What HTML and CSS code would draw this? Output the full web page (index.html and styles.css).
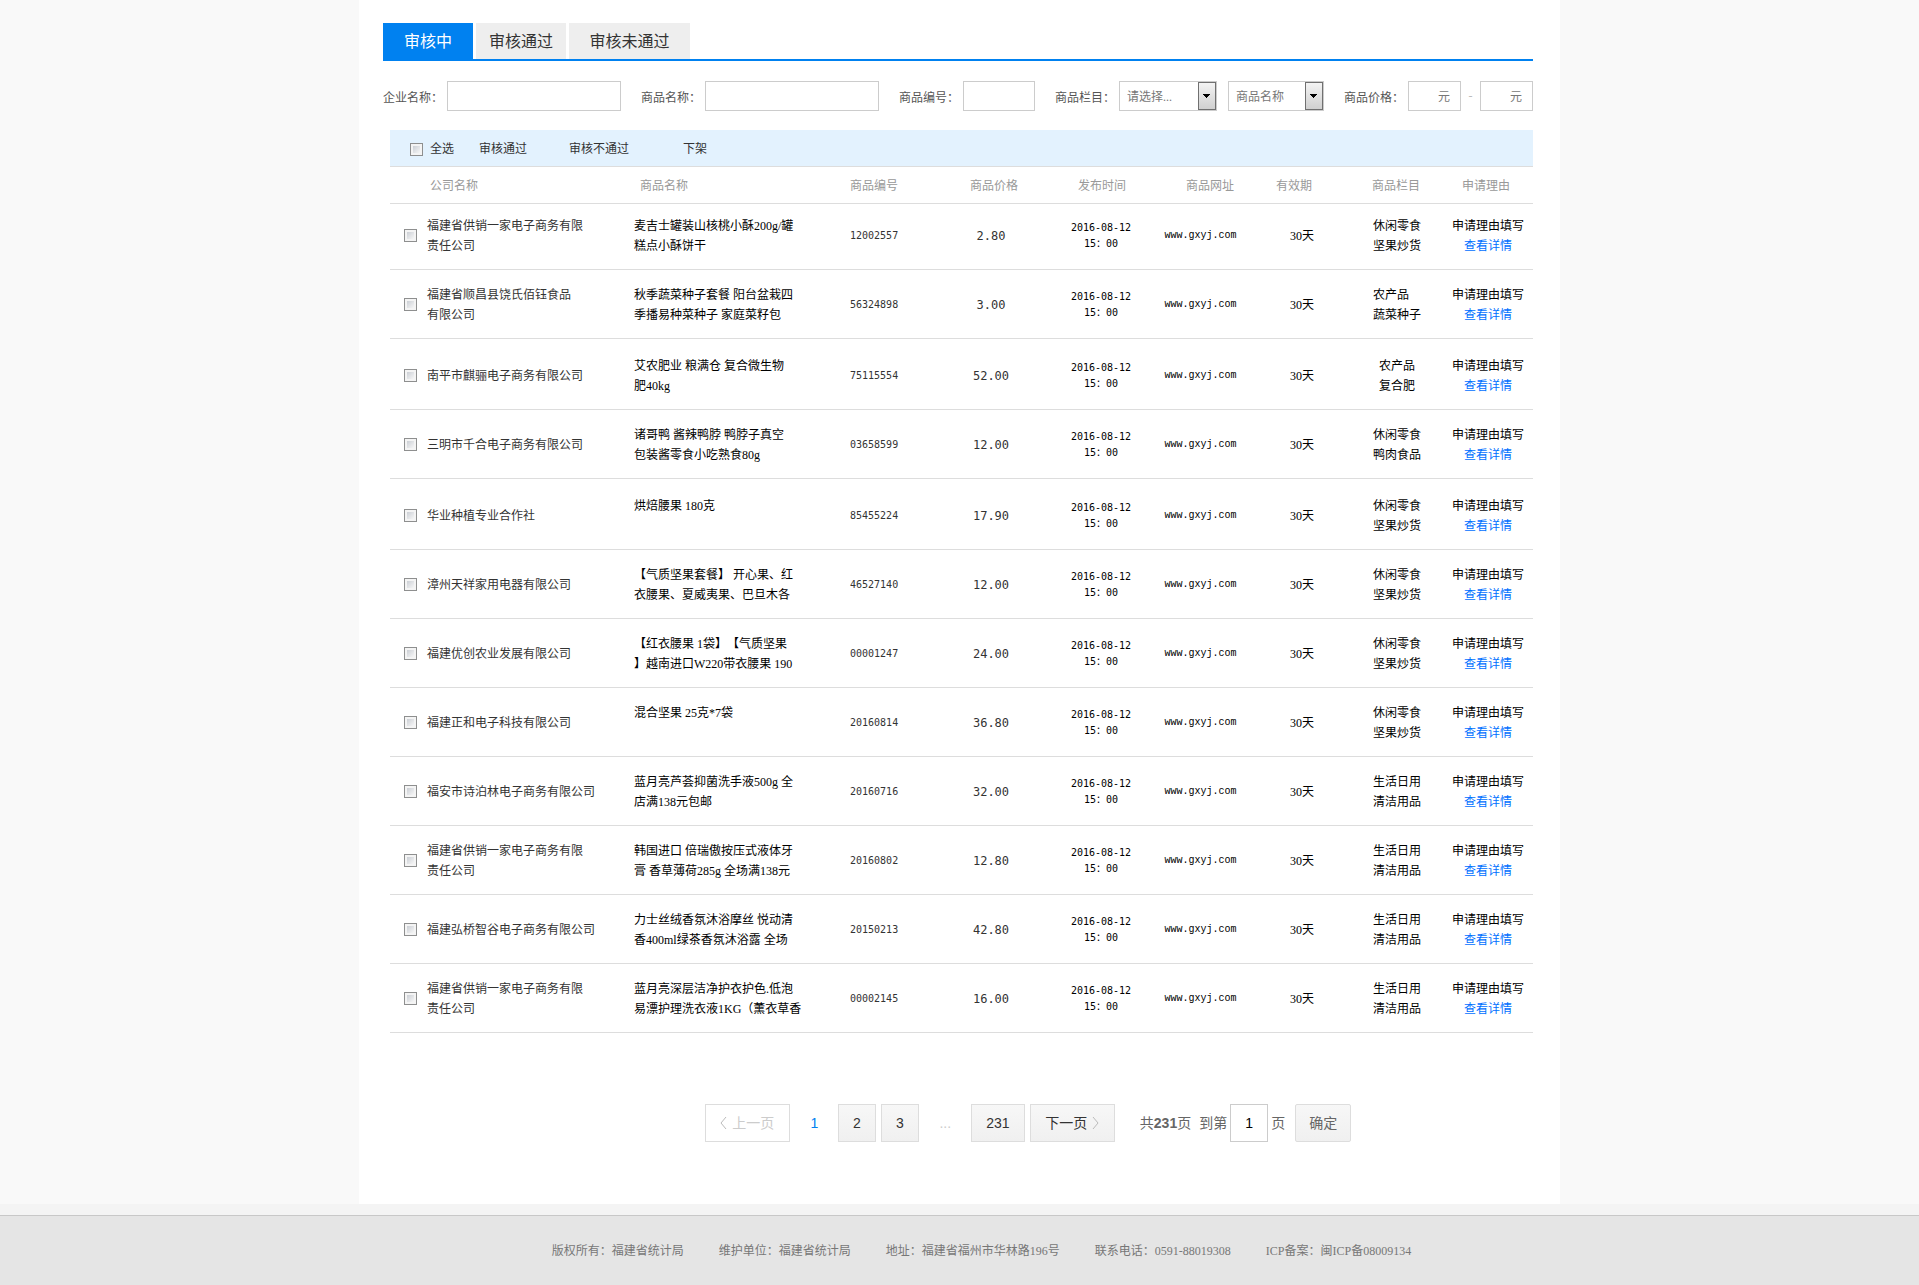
FILE: index.html
```
<!DOCTYPE html>
<html lang="zh-CN">
<head>
<meta charset="utf-8">
<title>商品审核</title>
<link rel="stylesheet" href="styles.css">
</head>
<body>
<main class="page">
  <nav class="tabs">
    <button type="button" class="tab active">审核中</button>
    <button type="button" class="tab">审核通过</button>
    <button type="button" class="tab wide">审核未通过</button>
  </nav>

  <form class="filters">
    <div class="field"><label for="company">企业名称：</label><input class="box long" id="company" type="text"></div>
    <div class="field"><label for="product">商品名称：</label><input class="box long" id="product" type="text"></div>
    <div class="field"><label for="code">商品编号：</label><input class="box short" id="code" type="text"></div>
    <div class="field"><label for="category">商品栏目：</label>
      <span class="drop"><select class="box" id="category"><option>请选择...</option></select><svg class="arrow" viewBox="0 0 18 28" aria-hidden="true"><use href="#drop-arrow"/></svg></span>
      <span class="drop second"><select class="box" aria-label="商品名称"><option>商品名称</option></select><svg class="arrow" viewBox="0 0 18 28" aria-hidden="true"><use href="#drop-arrow"/></svg></span>
    </div>
    <div class="field"><label for="low">商品价格：</label><input class="box price-box" id="low" type="text" placeholder="元"><span class="dash">-</span><input class="box price-box" type="text" placeholder="元" aria-label="最高价格"></div>
  </form>

  <section class="list">
    <div class="actions">
      <label class="all"><input type="checkbox">全选</label>
      <button type="button" class="pass">审核通过</button>
      <button type="button" class="fail">审核不通过</button>
      <button type="button">下架</button>
    </div>
    <table>
      <colgroup><col class="c-check"><col class="c-company"><col class="c-product"><col class="c-code"><col class="c-price"><col class="c-date"><col class="c-url"><col class="c-term"><col class="c-cat"><col class="c-why"></colgroup>
      <thead>
        <tr><th></th><th class="h-company">公司名称</th><th class="h-product">商品名称</th><th>商品编号</th><th class="h-price">商品价格</th><th class="h-date">发布时间</th><th class="h-url">商品网址</th><th class="h-term">有效期</th><th class="h-cat">商品栏目</th><th class="h-why">申请理由</th></tr>
      </thead>
      <tbody>
        <tr class="low"><td><input type="checkbox" aria-label="选择"></td><td class="company">福建省供销一家电子商务有限<br>责任公司</td><td class="product">麦吉士罐装山核桃小酥200g/罐<br>糕点小酥饼干</td><td class="code">12002557</td><td class="price">2.80</td><td class="date">2016-08-12<br>15：00</td><td class="url">www.gxyj.com</td><td class="term">30天</td><td class="cat"><span>休闲零食<br>坚果炒货</span></td><td class="why">申请理由填写<br><a href="#">查看详情</a></td></tr>
        <tr><td><input type="checkbox" aria-label="选择"></td><td class="company">福建省顺昌县饶氏佰钰食品<br>有限公司</td><td class="product">秋季蔬菜种子套餐 阳台盆栽四<br>季播易种菜种子 家庭菜籽包</td><td class="code">56324898</td><td class="price">3.00</td><td class="date">2016-08-12<br>15：00</td><td class="url">www.gxyj.com</td><td class="term">30天</td><td class="cat"><span>农产品<br>蔬菜种子</span></td><td class="why">申请理由填写<br><a href="#">查看详情</a></td></tr>
        <tr class="tall"><td><input type="checkbox" aria-label="选择"></td><td class="company">南平市麒骊电子商务有限公司</td><td class="product">艾农肥业 粮满仓 复合微生物<br>肥40kg</td><td class="code">75115554</td><td class="price">52.00</td><td class="date">2016-08-12<br>15：00</td><td class="url">www.gxyj.com</td><td class="term">30天</td><td class="cat"><span>农产品<br>复合肥</span></td><td class="why">申请理由填写<br><a href="#">查看详情</a></td></tr>
        <tr><td><input type="checkbox" aria-label="选择"></td><td class="company">三明市千合电子商务有限公司</td><td class="product">诸哥鸭 酱辣鸭脖 鸭脖子真空<br>包装酱零食小吃熟食80g</td><td class="code">03658599</td><td class="price">12.00</td><td class="date">2016-08-12<br>15：00</td><td class="url">www.gxyj.com</td><td class="term">30天</td><td class="cat"><span>休闲零食<br>鸭肉食品</span></td><td class="why">申请理由填写<br><a href="#">查看详情</a></td></tr>
        <tr class="tall"><td><input type="checkbox" aria-label="选择"></td><td class="company">华业种植专业合作社</td><td class="product">烘焙腰果 180克</td><td class="code">85455224</td><td class="price">17.90</td><td class="date">2016-08-12<br>15：00</td><td class="url">www.gxyj.com</td><td class="term">30天</td><td class="cat"><span>休闲零食<br>坚果炒货</span></td><td class="why">申请理由填写<br><a href="#">查看详情</a></td></tr>
        <tr><td><input type="checkbox" aria-label="选择"></td><td class="company">漳州天祥家用电器有限公司</td><td class="product">【气质坚果套餐】 开心果、红<br>衣腰果、夏威夷果、巴旦木各</td><td class="code">46527140</td><td class="price">12.00</td><td class="date">2016-08-12<br>15：00</td><td class="url">www.gxyj.com</td><td class="term">30天</td><td class="cat"><span>休闲零食<br>坚果炒货</span></td><td class="why">申请理由填写<br><a href="#">查看详情</a></td></tr>
        <tr><td><input type="checkbox" aria-label="选择"></td><td class="company">福建优创农业发展有限公司</td><td class="product">【红衣腰果 1袋】【气质坚果<br>】越南进口W220带衣腰果 190</td><td class="code">00001247</td><td class="price">24.00</td><td class="date">2016-08-12<br>15：00</td><td class="url">www.gxyj.com</td><td class="term">30天</td><td class="cat"><span>休闲零食<br>坚果炒货</span></td><td class="why">申请理由填写<br><a href="#">查看详情</a></td></tr>
        <tr><td><input type="checkbox" aria-label="选择"></td><td class="company">福建正和电子科技有限公司</td><td class="product">混合坚果 25克*7袋</td><td class="code">20160814</td><td class="price">36.80</td><td class="date">2016-08-12<br>15：00</td><td class="url">www.gxyj.com</td><td class="term">30天</td><td class="cat"><span>休闲零食<br>坚果炒货</span></td><td class="why">申请理由填写<br><a href="#">查看详情</a></td></tr>
        <tr><td><input type="checkbox" aria-label="选择"></td><td class="company">福安市诗泊林电子商务有限公司</td><td class="product">蓝月亮芦荟抑菌洗手液500g 全<br>店满138元包邮</td><td class="code">20160716</td><td class="price">32.00</td><td class="date">2016-08-12<br>15：00</td><td class="url">www.gxyj.com</td><td class="term">30天</td><td class="cat"><span>生活日用<br>清洁用品</span></td><td class="why">申请理由填写<br><a href="#">查看详情</a></td></tr>
        <tr><td><input type="checkbox" aria-label="选择"></td><td class="company">福建省供销一家电子商务有限<br>责任公司</td><td class="product">韩国进口 倍瑞傲按压式液体牙<br>膏 香草薄荷285g 全场满138元</td><td class="code">20160802</td><td class="price">12.80</td><td class="date">2016-08-12<br>15：00</td><td class="url">www.gxyj.com</td><td class="term">30天</td><td class="cat"><span>生活日用<br>清洁用品</span></td><td class="why">申请理由填写<br><a href="#">查看详情</a></td></tr>
        <tr><td><input type="checkbox" aria-label="选择"></td><td class="company">福建弘桥智谷电子商务有限公司</td><td class="product">力士丝绒香氛沐浴摩丝 悦动清<br>香400ml绿茶香氛沐浴露 全场</td><td class="code">20150213</td><td class="price">42.80</td><td class="date">2016-08-12<br>15：00</td><td class="url">www.gxyj.com</td><td class="term">30天</td><td class="cat"><span>生活日用<br>清洁用品</span></td><td class="why">申请理由填写<br><a href="#">查看详情</a></td></tr>
        <tr><td><input type="checkbox" aria-label="选择"></td><td class="company">福建省供销一家电子商务有限<br>责任公司</td><td class="product">蓝月亮深层洁净护衣护色.低泡<br>易漂护理洗衣液1KG（薰衣草香</td><td class="code">00002145</td><td class="price">16.00</td><td class="date">2016-08-12<br>15：00</td><td class="url">www.gxyj.com</td><td class="term">30天</td><td class="cat"><span>生活日用<br>清洁用品</span></td><td class="why">申请理由填写<br><a href="#">查看详情</a></td></tr>
      </tbody>
    </table>
  </section>

  <form class="pager">
    <button type="button" class="pg turn" disabled><svg class="chev" viewBox="0 0 7 14" aria-hidden="true"><path d="M6 1 1 7l5 6"/></svg>上一页</button>
    <span class="current">1</span>
    <a class="pg" href="#">2</a>
    <a class="pg" href="#">3</a>
    <span class="more">...</span>
    <a class="pg last" href="#">231</a>
    <button type="button" class="pg turn">下一页<svg class="chev" viewBox="0 0 7 14" aria-hidden="true"><path d="m1 1 5 6-5 6"/></svg></button>
    <span class="total">共<b>231</b>页</span>
    <label class="goto">到第<input type="text" value="1">页</label>
    <button type="button" class="pg ok">确定</button>
  </form>
</main>

<footer class="footer">
  <span>版权所有：福建省统计局</span>
  <span>维护单位：福建省统计局</span>
  <span>地址：福建省福州市华林路196号</span>
  <span>联系电话：0591-88019308</span>
  <span>ICP备案：闽ICP备08009134</span>
</footer>

<svg class="defs" aria-hidden="true">
  <linearGradient id="steel" x1="0" y1="0" x2="0" y2="1"><stop offset="0" stop-color="#f4f4f4"/><stop offset="1" stop-color="#cfcfcf"/></linearGradient>
  <symbol id="drop-arrow" viewBox="0 0 18 28"><rect x=".5" y=".5" width="17" height="27" fill="url(#steel)" stroke="#707070"/><path d="M5 12h7v1h-1v1h-1v1H9v1H8v-1H7v-1H6v-1H5z"/></symbol>
</svg>
</body>
</html>
```
FILE: styles.css
```
* {
  box-sizing: border-box;
}

body {
  margin: 0;
  background: #f9f9f9;
  color: #333;
  font: 12px/20px "Liberation Serif", "Noto Sans CJK SC", sans-serif;
  text-spacing-trim: space-all;
}

button,
input,
select {
  font: inherit;
  color: inherit;
  margin: 0;
}

.page {
  max-width: 1201px;
  margin: 0 auto;
  padding: 23px 27px 62px 24px;
  background: #fff;
}

.tabs {
  display: flex;
  gap: 3px;
  border-bottom: 2px solid #0081f0;
}

.tab {
  width: 90px;
  height: 36px;
  padding: 2px 0 0;
  border: 0;
  background: #eee;
  font-size: 16px;
}

.tab.wide {
  width: 121px;
}

.tab.active {
  background: #0081f0;
  color: #fff;
}

.filters {
  display: flex;
  justify-content: space-between;
  margin-top: 20px;
}

.field {
  display: flex;
  align-items: center;
}

.field label {
  width: 64px;
  padding-top: 1px;
  color: #555;
  font-family: "Noto Sans CJK SC", sans-serif;
  white-space: nowrap;
}

.box {
  height: 30px;
  padding: 2px 7px 0;
  border: 1px solid #ccc;
  border-radius: 0;
  background: #fff;
  color: #777;
}

.long {
  width: 174px;
}

.short {
  width: 72px;
}

.price-box {
  width: 53px;
  padding: 2px 10px 0;
  text-align: right;
}

.box::placeholder {
  color: #777;
}

.dash {
  width: 19px;
  color: #bbb;
  text-align: center;
}

.drop {
  display: grid;
}

.drop .box,
.drop .arrow {
  grid-area: 1 / 1;
}

.drop .box {
  width: 98px;
  appearance: none;
}

.drop.second {
  margin-left: 11px;
}

.drop.second .box {
  width: 96px;
}

.arrow {
  width: 18px;
  height: 28px;
  margin: 1px;
  justify-self: end;
  pointer-events: none;
}

.list {
  margin: 19px 0 0 7px;
}

.actions {
  display: flex;
  align-items: center;
  height: 37px;
  padding: 2px 0 0 20px;
  border-bottom: 1px solid #ddd;
  background: #e3f2fe;
}

.actions button {
  padding: 0;
  border: 0;
  background: none;
}

.all {
  display: flex;
  align-items: center;
  gap: 7px;
  margin-right: 25px;
}

.pass {
  margin-right: 42px;
}

.fail {
  margin-right: 54px;
}

input[type="checkbox"] {
  display: block;
  width: 13px;
  height: 13px;
  appearance: none;
  border: 1px solid #8e8f8f;
  background: linear-gradient(135deg, #cbcfd5, #f6f6f6) content-box, #f4f4f4;
  padding: 2px;
}

table {
  width: 100%;
  table-layout: fixed;
  border-collapse: collapse;
}

.c-check { width: 37px; }
.c-company { width: 207px; }
.c-product { width: 216px; }
.c-code { width: 90px; }
.c-price { width: 102px; }
.c-date { width: 118px; }
.c-url { width: 81px; }
.c-term { width: 110px; }
.c-cat { width: 92px; }

th {
  height: 36px;
  padding: 2px 0 0;
  border-bottom: 1px solid #ddd;
  color: #999;
  font-weight: 400;
  text-align: left;
}

.h-company { padding-left: 3px; }
.h-product { padding-left: 6px; }
.h-price { padding-left: 30px; }
.h-date { padding-left: 36px; }
.h-url { padding-left: 26px; }
.h-term { padding-left: 35px; }
.h-cat { padding-left: 21px; }
.h-why { padding-left: 19px; }

td {
  padding: 15px 0 13px;
  border-bottom: 1px solid #ddd;
  white-space: nowrap;
  color: #000;
  text-align: center;
}

.low td {
  padding-top: 12px;
}

.tall td {
  padding-top: 17px;
}

td input {
  margin-left: 14px;
}

.company,
.product,
.code {
  text-align: left;
}

.company,
.code,
.price {
  color: #333;
}

.product {
  vertical-align: top;
}

.code,
.date,
.url {
  font-family: "DejaVu Sans Mono", "Noto Sans CJK SC", monospace;
  font-size: 10px;
  line-height: 16px;
}

.price {
  font-family: "DejaVu Sans Mono", monospace;
}

.url {
  font-family: "Liberation Mono", monospace;
}

td.term {
  padding-left: 12px;
}

.cat span {
  display: inline-block;
  text-align: left;
}

.why a {
  color: #0070ff;
  text-decoration: none;
}

.pager {
  display: flex;
  align-items: center;
  justify-content: center;
  margin-top: 71px;
  padding-left: 140px;
  font: 14px/20px "Liberation Sans", "Noto Sans CJK SC", sans-serif;
  color: #666;
}

.pg {
  display: flex;
  align-items: center;
  justify-content: center;
  width: 38px;
  height: 38px;
  margin-right: 5px;
  padding: 0;
  border: 1px solid #ddd;
  background: linear-gradient(#f7f7f7, #f0f0f0);
  color: #333;
  text-decoration: none;
}

.turn {
  width: 85px;
  gap: 5px;
}

.turn:disabled {
  background: #fff;
  color: #ccc;
}

.chev {
  width: 7px;
  height: 14px;
  fill: none;
  stroke: #bbb;
}

.current {
  width: 43px;
  padding-right: 4px;
  color: #0081f0;
  text-align: center;
}

.more {
  width: 47px;
  padding-right: 4px;
  color: #ccc;
  text-align: center;
}

.last {
  width: 54px;
}

.total {
  margin: 0 8px 0 20px;
}

.goto {
  display: flex;
  align-items: center;
  gap: 3px;
}

.goto input {
  width: 38px;
  height: 38px;
  border: 1px solid #ccc;
  color: #000;
  text-align: center;
}

.ok {
  width: 56px;
  margin: 0 0 0 10px;
  border-radius: 2px;
  color: #666;
}

.footer {
  display: flex;
  justify-content: center;
  gap: 35px;
  margin-top: 11px;
  padding: 25px 0 24px 44px;
  border-top: 1px solid #c8c8c8;
  background: #e5e5e5;
  box-shadow: 0 -11px 0 #f4f4f4;
  color: #777;
}

.defs {
  position: absolute;
  width: 0;
  height: 0;
}
```
